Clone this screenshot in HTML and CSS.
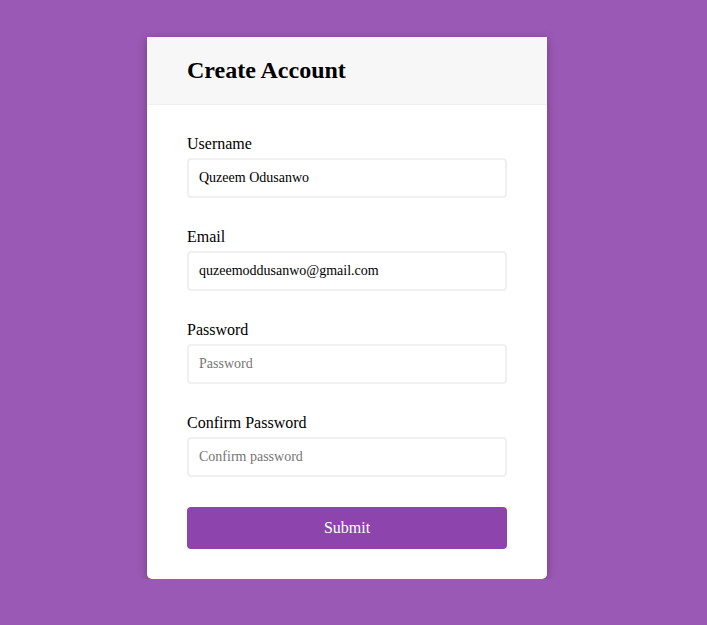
FILE: index.html
```html
<!DOCTYPE html>
<html>
<head>
<meta charset="utf-8">
<link rel="stylesheet" href="styles.css">
</head>
<body>
<div class="container">
  <div class="header"><h2>Create Account</h2></div>
  <form class="form">
    <div class="form-control">
      <label>Username</label>
      <input type="text" value="Quzeem Odusanwo">
    </div>
    <div class="form-control">
      <label>Email</label>
      <input type="text" value="quzeemoddusanwo@gmail.com">
    </div>
    <div class="form-control">
      <label>Password</label>
      <input type="password" placeholder="Password">
    </div>
    <div class="form-control">
      <label>Confirm Password</label>
      <input type="password" placeholder="Confirm password">
    </div>
    <button type="button" class="submit">Submit</button>
  </form>
</div>
</body>
</html>
```
FILE: styles.css
```css
* { box-sizing: border-box; }
body {
  margin: 0;
  background: #9b59b6;
  font-family: "Liberation Serif", "Times New Roman", serif;
}
.container {
  width: 400px;
  margin: 37px 0 0 147px;
  background: #fff;
  border-radius: 0 0 5px 5px;
  box-shadow: 0 2px 10px rgba(0, 0, 0, 0.3);
  overflow: hidden;
}
.header {
  background: #f7f7f7;
  border-bottom: 1px solid #f0f0f0;
  padding: 20px 40px;
}
.header h2 {
  margin: 0;
  font-size: 24px;
  font-weight: bold;
  color: #000;
}
.form {
  padding: 30px 40px;
}
.form-control {
  margin-bottom: 30px;
}
.form-control label {
  display: block;
  font-size: 16px;
  color: #000;
  margin-bottom: 5px;
}
.form-control input {
  display: block;
  width: 100%;
  border: 2px solid #f0f0f0;
  border-radius: 4px;
  padding: 10px;
  font-family: inherit;
  font-size: 14px;
  color: #000;
  outline: none;
}
.form-control input::placeholder { color: #757575; }
.submit {
  display: block;
  width: 100%;
  background: #8e44ad;
  border: 2px solid #8e44ad;
  border-radius: 4px;
  color: #fff;
  font-family: inherit;
  font-size: 16px;
  padding: 10px;
}
```
